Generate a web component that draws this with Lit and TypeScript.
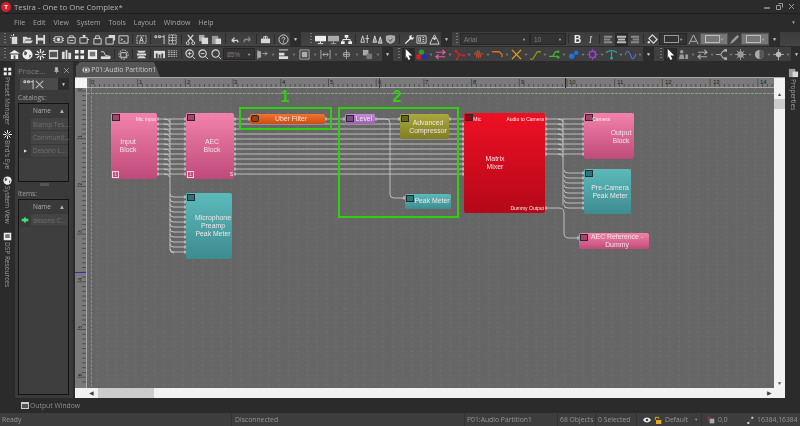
import { LitElement, html, css, svg } from "lit";
import { customElement } from "lit/decorators.js";

const G = "#d8d8d8";

// simple toolbar glyphs, 12x12
const icons: Record<string, any> = {
  new: svg`<path d="M3 3h6v8H3z" fill="${G}"/><path d="M2 1l1 1M5 0v2M1 4h1" stroke="#fff"/>`,
  open: svg`<path d="M1 3h4l1 1h4v2H4L2 10H1zM4 7h8l-2 3H2z" fill="${G}"/>`,
  save: svg`<path d="M1 1h10v10H1z" fill="${G}"/><path d="M3 1h6v3H3zM3 7h6v4H3z" fill="#444"/>`,
  dev1: svg`<path d="M2 3h8v6H2zM0 5h2M0 7h2M10 5h2M10 7h2" fill="none" stroke="${G}"/><circle cx="6" cy="6" r="2" fill="${G}"/>`,
  dev2: svg`<path d="M2 4h8v6H2z" fill="none" stroke="${G}"/><path d="M4 4V2h4v2M4 7h4" stroke="${G}" fill="none"/>`,
  dev3: svg`<path d="M1 4h8v6H1zM9 6h2" fill="none" stroke="${G}"/><path d="M4 1h3v3H4z" fill="${G}"/>`,
  lock: svg`<path d="M2 5h8v6H2z" fill="none" stroke="${G}"/><path d="M4 5V2h4v3" fill="none" stroke="${G}"/>`,
  pic: svg`<path d="M1 4h8v7H1z" fill="none" stroke="${G}"/><path d="M4 1h7v6H9V4H4z" fill="${G}"/>`,
  term: svg`<path d="M1 2h10v8H1z" fill="none" stroke="${G}"/><path d="M3 5l2 1-2 1M6 8h2" stroke="${G}" fill="none"/>`,
  txt: svg`<path d="M1 2h10v8H1z" fill="none" stroke="${G}" stroke-dasharray="2 1"/><path d="M4 9l2-6 2 6M5 7h2" stroke="${G}" fill="none"/>`,
  port: svg`<path d="M1 2h2v2H1zM5 2h2v2H5zM8 3h3M11 1v10" stroke="${G}" fill="none"/>`,
  grid: svg`<path d="M2 1h8v10H2zM6 1v10M2 4h8M2 7h8" stroke="${G}" fill="none" stroke-dasharray="1.5 .5"/>`,
  cut: svg`<path d="M3 1l6 7M9 1L3 8" stroke="${G}" stroke-width="1.3"/><circle cx="3" cy="10" r="1.6" fill="none" stroke="${G}"/><circle cx="9" cy="10" r="1.6" fill="none" stroke="${G}"/>`,
  copy: svg`<path d="M1 1h6v7H1z" fill="#aaa"/><path d="M4 4h7v7H4z" fill="${G}"/>`,
  paste: svg`<path d="M1 2h7v9H1z" fill="#999"/><path d="M5 5h6v6H5z" fill="${G}"/>`,
  undo: svg`<path d="M3 7h6l1 2M3 7l3-3M3 7l3 2" stroke="${G}" stroke-width="1.4" fill="none"/>`,
  redo: svg`<path d="M9 6H3L2 9M9 6L7 3M9 6L7 8" stroke="#888" stroke-width="1.4" fill="none"/>`,
  bag: svg`<path d="M1 5h10v5H1z" fill="${G}"/><path d="M4 5V3h4v2M6 2v4" stroke="${G}" fill="none"/>`,
  help: svg`<circle cx="6" cy="6" r="5" fill="none" stroke="${G}"/><path d="M4.5 5c0-2 3-2 3 0 0 1-1.500 1-1.500 2M6 8v1.500" stroke="${G}" fill="none"/>`,
  mon: svg`<path d="M0 2h12v6H0z" fill="#eee"/><path d="M6 8v2M3 10.500h6" stroke="#eee"/>`,
  mon2: svg`<path d="M0 2h12v6H0z" fill="#aaa"/><path d="M6 8v2M3 10.500h6" stroke="#aaa"/>`,
  tree: svg`<path d="M4 1h4v3H4zM0 8h4v3H0zM8 8h4v3H8z" fill="#eee"/><path d="M6 4v2M2 8V6h8v2" stroke="#eee" fill="none"/>`,
  rec1: svg`<path d="M4 2l-2 7h4zM9 1v9M7 5h4" stroke="${G}" fill="none"/>`,
  rec2: svg`<path d="M3 2l-2 7h4zM9 3l-2 7h4z" stroke="${G}" fill="#888"/>`,
  shield: svg`<path d="M1 2l5-1 5 1v4c0 3-3 4-5 5-2-1-5-2-5-5z" fill="#aaa"/><path d="M4 6l2 2 2-3" stroke="#444" fill="none"/>`,
  wrench: svg`<path d="M2 10l5-5V2l3-1-1 2 1 1 2-1-1 3H8l-5 5z" fill="#eee"/>`,
  form: svg`<path d="M1 2h10v8H1z" fill="none" stroke="${G}"/><path d="M3 4h2v4H3zM7 4h2M7 6h2M7 8h2" stroke="${G}" fill="none"/>`,
  user: svg`<path d="M6 1l3 5 2 5H1l2-5z" fill="none" stroke="${G}"/><circle cx="6" cy="5" r="1.500" fill="${G}"/>`,
  al: svg`<path d="M1 2h9v2H1zM1 5h7v2H1zM1 8h9v2H1z" fill="#888"/>`,
  ac: svg`<path d="M1 2h10v2H1zM2 5h8v2H2zM1 8h10v2H1z" fill="#bbb"/>`,
  ar: svg`<path d="M2 2h9v2H2zM4 5h7v2H4zM2 8h9v2H2z" fill="#888"/>`,
  bucket: svg`<path d="M6 1l5 5-4 4-5-5z" fill="none" stroke="${G}" stroke-width="1.300"/><circle cx="2" cy="9" r="1.300" fill="${G}"/>`,
  font: svg`<path d="M1 11l5-10 5 10M3 8h6" stroke="#bbb" fill="none"/>`,
  pen: svg`<path d="M1 11l2-4 6-6 2 2-6 6z" fill="#999"/>`,
  house: svg`<path d="M0 5l6-4 6 4H0zM2 6h8v5H2z" fill="#eee"/><path d="M5 7h2v4H5z" fill="#555"/>`,
  globe: svg`<circle cx="6" cy="6" r="5.500" fill="#eee"/><path d="M3 2l3 2-2 3-2-1zM8 6l2 1-2 3z" fill="#555"/>`,
  burst: svg`<path d="M6 0v12M0 6h12M2 2l8 8M10 2l-8 8" stroke="#eee" stroke-width="1.300"/><circle cx="6" cy="6" r="2" fill="#555"/>`,
  panel: svg`<path d="M1 1h10v10H1z" fill="#ddd"/><path d="M2 3h8v6H2z" fill="#555"/>`,
  bars: svg`<path d="M1 3h3v8H1zM5 1h2v10H5zM8 4h3v7H8z" fill="#ddd"/>`,
  four: svg`<path d="M1 1h4v4H1zM7 1h4v4H7zM1 7h4v4H1zM7 7h4v4H7z" fill="#eee"/>`,
  frame: svg`<path d="M1 1h10v10H1z" fill="#eee"/><path d="M3 3h6v5H3z" fill="#777"/>`,
  stage: svg`<path d="M1 10h10V8L6 7 4 3H1" fill="none" stroke="#ddd"/><path d="M1 8h10v3H1z" fill="#ddd"/>`,
  scan: svg`<circle cx="6" cy="6" r="5" fill="none" stroke="${G}" stroke-dasharray="2 1"/><path d="M3 4h6v5H3z" fill="none" stroke="${G}"/>`,
  stack: svg`<path d="M1 2h10l-2 2H3zM1 5h10v2H1zM3 8h6l2 2H1z" fill="#ddd"/>`,
  strip: svg`<path d="M0 2h12v8H0z" fill="#ddd"/><path d="M2 5h2v5H2zM5 6h2v4H5zM8 5h2v5H8z" fill="#444"/>`,
  dots: svg`<path d="M1 2h10M1 4h10M1 6h10M1 8h10" stroke="#ccc" stroke-dasharray="2 1"/>`,
  zin: svg`<circle cx="5" cy="5" r="4" fill="none" stroke="${G}" stroke-width="1.200"/><path d="M8 8l3 3M3 5h4M5 3v4" stroke="${G}" stroke-width="1"/>`,
  zout: svg`<circle cx="5" cy="5" r="4" fill="none" stroke="${G}" stroke-width="1.200"/><path d="M8 8l3 3M3 5h4" stroke="${G}"/>`,
  zfit: svg`<circle cx="5" cy="5" r="4" fill="none" stroke="${G}" stroke-width="1.200"/><path d="M8 8l3 3" stroke="${G}"/>`,
  aleft: svg`<path d="M1 1v10M1 3h3v6H1z" stroke="#aaa" fill="#aaa"/><path d="M6 5h5M9 3l2 2-2 2" stroke="#aaa" fill="none"/>`,
  atop: svg`<path d="M1 1h10" stroke="#ddd"/><path d="M1 4h6v3H1zM1 8h10v3H1z" fill="#ddd"/>`,
  acen: svg`<path d="M1 1h10v10H1z" fill="none" stroke="#aaa"/><path d="M3 3h6v6H3z" fill="#aaa"/>`,
  hsp: svg`<path d="M1 1v10M11 1v10M3 6h6M3 6l2-2M3 6l2 2M9 6L7 4M9 6L7 8" stroke="#aaa" fill="none"/>`,
  vsp: svg`<path d="M6 1v10M2 6h8M3 4h6v4H3z" stroke="#aaa" fill="none"/>`,
  sq2: svg`<path d="M1 1h6v6H1z" fill="#aaa"/><path d="M5 5h6v6H5z" fill="#777"/>`,
  cursor: svg`<path d="M3 0l7 7H6l2 4-2 1-2-4-1 2z" fill="#fff"/>`,
  rgb: svg`<circle cx="6" cy="3.500" r="3" fill="#2a9a2a"/><circle cx="3" cy="8.500" r="3" fill="#d02020"/><path d="M6 6h6v5H6z" fill="#2030b0"/>`,
  conn1: svg`<path d="M1 3.500h9M8 1l3 2.500L8 6M11 8.500H2M4 6L1 8.500 4 11" stroke="#e060a0" stroke-width="1.200" fill="none"/>`,
  conn2: svg`<path d="M1 2l5 4 5 1M6 6l-3 5" stroke="#e02020" stroke-width="1.300" fill="none"/><circle cx="2" cy="2" r="1.300" fill="#e02020"/><circle cx="11" cy="7" r="1.300" fill="#e02020"/><circle cx="3" cy="11" r="1.300" fill="#e02020"/>`,
  conn3: svg`<path d="M1 6h1l1-3 1 6 1-8 1 9 1-8 1 7 1-4h2" stroke="#c84828" fill="none"/>`,
  conn4: svg`<path d="M0 3h8l3 3v3" stroke="#e07020" stroke-width="1.400" fill="none"/>`,
  conn5: svg`<path d="M1 1l10 10M11 1L1 11" stroke="#e8a020" stroke-width="1.400"/>`,
  conn6: svg`<path d="M0 11h3l5-8h4" stroke="#909020" stroke-width="1.400" fill="none"/>`,
  conn7: svg`<path d="M0 8h4l3-5h3M4 8h6" stroke="#40b030" stroke-width="1.400" fill="none"/><circle cx="10" cy="3" r="1.500" fill="#40b030"/><circle cx="10" cy="9" r="1.500" fill="#40b030"/>`,
  conn8: svg`<circle cx="4" cy="8" r="3" fill="#2070e0"/><circle cx="9" cy="4" r="2.500" fill="#2070e0"/>`,
  conn9: svg`<circle cx="6" cy="6" r="3.500" fill="none" stroke="#a040d8" stroke-width="1.600"/><path d="M6 0v2M6 10v2M0 6h2M10 6h2M2 2l1 1M9 9l1 1M10 2L9 3M2 10l1-1" stroke="#a040d8"/>`,
  conn10: svg`<path d="M0 4c3-3 9-3 12 0M6 3v7" stroke="#30a0a0" stroke-width="1.300" fill="none"/><circle cx="6" cy="10" r="1.500" fill="#30a0a0"/>`,
  conn11: svg`<path d="M0 7c2-6 4-6 6 0s4 4 6-2" stroke="#6070d8" stroke-width="1.200" fill="none"/>`,
  g1: svg`<circle cx="4" cy="3" r="2" fill="#999"/><path d="M1 11l1-5h4l1 5zM8 6h3v5H8z" fill="#999"/>`,
  g2: svg`<path d="M1 3.500h9M8 1l3 2.500L8 6M11 8.500H2M4 6L1 8.500 4 11" stroke="#aaa" stroke-width="1.200" fill="none"/>`,
  g3: svg`<path d="M0 6h5l3-4h2M5 6l3 4h2" stroke="#aaa" stroke-width="1.200" fill="none"/><path d="M9 0h3v3H9zM9 9h3v3H9z" fill="#aaa"/>`,
  g4: svg`<circle cx="6" cy="6" r="3.500" fill="#999"/><path d="M6 0v12M0 6h12M2 2l8 8M10 2l-8 8" stroke="#999"/>`,
  g5: svg`<circle cx="6" cy="6" r="5" fill="#aaa"/><path d="M6 1a5 5 0 010 10z" fill="#555"/>`,
  g6: svg`<path d="M6 0v12M0 6h12" stroke="#aaa"/><circle cx="6" cy="6" r="3" fill="#bbb"/>`,
  pin: svg`<path d="M4 1h4v5l1.500 1.500h-7L4 6zM6 7.500V11" fill="#bbb" stroke="#bbb"/>`,
  close: svg`<path d="M2 2l8 8M10 2l-8 8" stroke="#bbb" stroke-width="1.200"/>`,
};

type Item =
  | string
  | { k: "sep" | "grip" | "drop" | "arrow" | "gap" | "hi" | "on"; n?: string; w?: number }
  | { combo: string; w: number; tone?: string };
const S = { k: "sep" } as const;
const GR = { k: "grip" } as const;
const D = { k: "drop" } as const;
const A = { k: "arrow" } as const;
const A8 = { k: "arrow", w: 8 } as const;

const row1: Item[] = [
  GR, "new", "open", "save", S, "dev1", "dev2", "dev3", "lock", "pic", "term", S, "txt", S, "port", "grid", S,
  "cut", "copy", "paste", S, "undo", "redo", S, "bag", S, "help", D, { k: "gap", w: 7 }, GR, "mon", "mon2", "tree", S,
  "rec1", "rec2", "shield", S, "wrench", "form", "user", D, { k: "gap", w: 2 }, GR,
  { combo: "Arial", w: 70 }, { combo: "10", w: 36 }, S, { k: "hi", n: "B" }, { k: "hi", n: "I" }, S, "al", { k: "on", n: "ac" }, "ar", S,
  "bucket", { combo: "", w: 28 }, "font", { combo: "", w: 28, tone: "light" }, "pen", { combo: "", w: 28, tone: "light" }, D,
];

const row2: Item[] = [
  GR, "house", "globe", "burst", "panel", "bars", "four", "frame", "stage", S, "scan", S, "stack", S, "strip", "dots", S,
  "zin", "zout", "zfit", { combo: "85%", w: 32 }, { k: "gap", w: 1 }, "aleft", A8, "atop", A8, "acen", A8, "hsp", A8, "vsp", A8, "sq2", A8, D,
  { k: "gap", w: 3 }, GR, { k: "on", n: "cursor" }, "rgb", A, "conn1", A, "conn2", A, "conn3", A, "conn4", A, "conn5", A, "conn6", A, "conn7", A,
  "conn8", A, "conn9", A, "conn10", A, "conn11", A, D, { k: "gap", w: 4 }, GR, { k: "on", n: "cursor" }, "g1", A, "g2", A, "g3", A, "g4", A, "g5", A, "g6", A, D,
];

const ic = (n: string) => html`<svg class="ic" viewBox="0 0 12 12">${icons[n]}</svg>`;

type Block = { x: number; y: number; w: number; h: number; c: string; lines: string[]; cx: number; cy: number; badge: string; one?: boolean };

const blocks: Block[] = [
  { x: 111, y: 113, w: 46, h: 66, c: "pink", lines: ["Input", "Block"], cx: 128, cy: 146, badge: "pink", one: true },
  { x: 186, y: 113, w: 48, h: 66, c: "pink", lines: ["AEC", "Block"], cx: 212, cy: 146, badge: "pink", one: true },
  { x: 186, y: 193, w: 46, h: 66, c: "teal", lines: ["Microphone", "Preamp", "Peak Meter"], cx: 213, cy: 226, badge: "teal" },
  { x: 250, y: 114, w: 75, h: 10, c: "orange", lines: ["Uber Filter"], cx: 291, cy: 119, badge: "orange" },
  { x: 345, y: 114, w: 30, h: 10, c: "purple", lines: ["Level"], cx: 364, cy: 119, badge: "purple" },
  { x: 400, y: 114, w: 49, h: 25, c: "olive", lines: ["Advanced", "Compressor"], cx: 428, cy: 127, badge: "olive" },
  { x: 405, y: 194, w: 46, h: 15, c: "teal", lines: ["Peak Meter"], cx: 432, cy: 201, badge: "teal" },
  { x: 464, y: 113, w: 81, h: 100, c: "red", lines: ["Matrix", "Mixer"], cx: 495, cy: 163, badge: "red" },
  { x: 584, y: 113, w: 50, h: 46, c: "pink", lines: ["Output", "Block"], cx: 621, cy: 137, badge: "pink" },
  { x: 584, y: 169, w: 47, h: 45, c: "teal", lines: ["Pre-Camera", "Peak Meter"], cx: 610, cy: 192, badge: "teal" },
  { x: 579, y: 233, w: 70, h: 16, c: "pink", lines: ["AEC Reference -", "Dummy"], cx: 617, cy: 241, badge: "pink" },
];

const portLabels = [
  { t: "Mic Input", r: 156, y: 119 },
  { t: "Audio to Camera", r: 544, y: 119 },
  { t: "Dummy Output", r: 544, y: 208 },
  { t: "Mic", r: 481, y: 119 },
  { t: "Camera", r: 610, y: 119 },
  { t: "S", r: 233, y: 174 },
];

// canvas starts at 87,88 in page coords
const OX = 87;
const OY = 88;
const ys = (from: number, n: number) => Array.from({ length: n }, (_, i) => from + i * 5);

function wirePaths(): string[] {
  const p: string[] = [];
  ys(119, 12).forEach((y) => p.push(`M157 ${y}H186`));
  ys(119, 12).forEach((y) => p.push(`M164 ${y}q4 0 6 3`));
  p.push("M170 119V249q0 4 4 4");
  ys(197, 12).forEach((y) => p.push(`M170 ${y - 3}q0 3 4 3H186`));
  p.push("M234 119H250M325 119H345M375 119H400M449 119H464");
  ys(124, 11).forEach((y) => {
    if (y < 139) {
      p.push(`M234 ${y}H400M449 ${y}H464`);
    } else {
      p.push(`M234 ${y}H464`);
    }
  });
  p.push("M375 119H386q4 0 4 4V194q0 4 4 4H405");
  ys(119, 8).forEach((y) => p.push(`M545 ${y}H584`));
  ys(119, 8).forEach((y) => p.push(`M558 ${y}q4 0 5 3`));
  p.push("M563 119V205");
  ys(173, 8).forEach((y) => p.push(`M564 ${y - 3}q0 3 4 3H584`));
  p.push("M545 208H559q5 0 5 5V233q0 5 5 5H579");
  return p;
}

function stubs() {
  const out: [number, number][] = [];
  ys(119, 12).forEach((y) => { out.push([157, y], [184, y], [234, y]); });
  ys(197, 12).forEach((y) => out.push([184, y]));
  out.push([248, 119], [325, 119], [343, 119], [375, 119], [398, 119], [449, 119], [403, 198], [577, 238], [545, 208]);
  ys(124, 11).forEach((y) => out.push([462, y]));
  ys(119, 8).forEach((y) => { out.push([545, y], [582, y]); });
  ys(173, 8).forEach((y) => out.push([582, y]));
  return out;
}

const rulerX = [90, 138, 186, 233, 281, 329, 377, 424, 472, 520, 568, 616, 664, 712, 759];
const sideRail = [
  { t: "Preset Manager", i: "four" },
  { t: "Bird's Eye", i: "burst" },
  { t: "System View", i: "globe" },
  { t: "DSP Resources", i: "frame" },
];

@customElement("app-root")
export class AppRoot extends LitElement {
  static styles = css`
    :host {
      display: block;
      width: 800px;
      height: 426px;
      overflow: hidden;
      background: #2b2b2b;
      font-family: "Open Sans", "Liberation Sans", sans-serif;
      color: #a8a8a8;
    }
    .app { display: flex; flex-direction: column; height: 426px; filter: blur(0.3px); }
    .title { height: 13px; display: flex; align-items: center; padding-left: 1px; gap: 3px; font-size: 7.800px; color: #b4b4b4; white-space: nowrap; }
    .logo { width: 10px; height: 10px; border-radius: 50%; background: #d8202a; color: #fff; font: bold 6px "Liberation Sans", sans-serif; display: flex; align-items: center; justify-content: center; }
    .winbtns { margin-left: auto; display: flex; gap: 5px; padding-right: 5px; align-items: center; }
    .winbtns svg { width: 7px; height: 7px; }
    .menu { height: 17px; box-sizing: border-box; display: flex; align-items: center; font-size: 7px; padding-left: 14px; gap: 8px; border-top: 1px solid #1e1e1e; color: #a4a4a4; position: relative; }
    .menu .more { margin-left: auto; margin-right: 4px; color: #999; font-size: 5px; }
    .bars { height: 30px; display: flex; flex-direction: column; }
    .tb { height: 14px; margin-top: 1px; display: flex; align-items: center; background: #3f3f3f; padding-left: 2px; }
    .tb:first-child { margin-top: 2px; background: linear-gradient(#3c3c3c, #444); }
    .cell { flex: 0 0 13px; height: 13px; display: flex; align-items: center; justify-content: center; }
    .cell.on { background: #2a2a2a; }
    .ic { width: 11px; height: 11px; display: block; }
    .sep { flex: 0 0 5px; height: 12px; position: relative; }
    .sep::after { content: ""; position: absolute; left: 2px; top: 1px; width: 1px; height: 10px; background: #2b2b2b; }
    .grip { flex: 0 0 6px; height: 12px; background: repeating-linear-gradient(#777 0 1px, transparent 1px 3px) 2px 0 / 2px 100% no-repeat; }
    .arrow { flex: 0 0 6px; height: 13px; font-size: 4px; color: #888; display: flex; align-items: center; justify-content: center; }
    .drop { flex: 0 0 11px; height: 14px; background: #2c2c2c; color: #ccc; font-size: 5px; display: flex; align-items: center; justify-content: center; }
    .combo { height: 12px; box-sizing: border-box; background: #333; border: 1px solid #272727; display: flex; align-items: center; padding: 0 3px; font: 6.500px "Liberation Sans", sans-serif; color: #808080; }
    .combo i { margin-left: auto; font-size: 4px; font-style: normal; color: #aaa; }
    .combo b { width: 13px; height: 6px; border: 1px solid #999; margin-left: 1px; }
    .combo.light { background: #777; border-color: #555; }
    .combo.light b { border-color: #bbb; }
    .hi { flex: 0 0 13px; text-align: center; font: bold 10px "Liberation Sans", sans-serif; color: #eee; }
    .hi.i { font: italic 10px "Liberation Serif", serif; color: #ccc; }

    .main { flex: 1; display: flex; min-height: 0; }
    .rail { width: 14px; flex: none; display: flex; flex-direction: column; align-items: center; padding-top: 7px; box-sizing: border-box; }
    .rail-item { display: flex; flex-direction: column; align-items: center; gap: 1px; height: 56px; }
    .rail-item:first-child { height: 63px; }
    .rail-item:nth-child(2) { height: 46px; }
    .rail-item .ic { width: 9px; height: 9px; }
    .vt { writing-mode: vertical-rl; font-size: 6.500px; line-height: 9px; color: #9a9a9a; white-space: nowrap; }

    .panel { width: 58px; flex: none; box-sizing: border-box; background: #3a3a3a; margin: 2px 0 0 1px; display: flex; flex-direction: column; padding: 0 3px 3px; }
    .phead { height: 16px; flex: none; display: flex; align-items: center; font-size: 8px; color: #808080; justify-content: space-between; }
    .phead span:last-child { display: flex; gap: 3px; }
    .phead .ic { width: 7px; height: 7px; }
    .ptools { height: 12px; flex: none; background: #4a4a4a; display: flex; align-items: center; padding-left: 3px; margin: 0 1px 0 2px; }
    .ptools .drop { margin-left: auto; height: 12px; }
    .plabel { font-size: 6.600px; color: #a0a0a0; height: 11px; flex: none; display: flex; align-items: center; margin-top: 2px; }
    .ptable { border: 1px solid #141414; background: #3e3e3e; box-sizing: border-box; display: flex; flex-direction: column; margin-right: 1px; }
    .ptable.cat { height: 79px; flex: none; }
    .ptable.items { flex: 1; }
    .tr { height: 12.300px; flex: none; display: flex; align-items: center; font-size: 6.400px; border-bottom: 1px solid #383838; }
    .tr .gut { width: 12px; height: 100%; background: #393939; flex: none; display: flex; align-items: center; justify-content: center; font-size: 4px; color: #ddd; }
    .tr .gut .ic { width: 8px; height: 8px; }
    .tr .val { padding-left: 2px; color: #707070; white-space: nowrap; background: #444; flex: 1; min-width: 0; height: 100%; display: flex; align-items: center; }
    .tr.head { height: 13px; color: #b0b0b0; }
    .tr.head .val { background: #3a3a3a; color: #b0b0b0; justify-content: space-between; padding-right: 3px; }
    .splitter { height: 4px; flex: none; padding-top: 1px; box-sizing: border-box; display: flex; justify-content: center; }
    .splitter i { width: 9px; height: 3px; background: #555; }

    .work { flex: 1; min-width: 0; margin-left: 2px; display: flex; flex-direction: column; }
    .tabs { height: 17px; padding: 2px 0 0 1px; box-sizing: border-box; flex: none; }
    .tab { width: 84px; height: 15px; box-sizing: border-box; background: #555; display: flex; align-items: center; gap: 1px; padding-left: 6px; font-size: 6.800px; color: #c8c8c8; clip-path: polygon(0 4px, 4px 0, 78px 0, 84px 100%, 0 100%); white-space: nowrap; }
    .tab .ic { width: 9px; height: 8px; }
    .doc { flex: 1; min-height: 0; display: grid; grid-template-columns: 12px 1fr 11px; grid-template-rows: 10px 1fr 10px; border-top: 1px solid #aaa; }
    .corner { background: #f4f4f4; }
    .ruler { background: #7a7a7a; border-bottom: 1px solid #a8a8a8; box-sizing: border-box; }
    .ruler.side { border-bottom: 0; border-right: 1px solid #a8a8a8; }
    .ruler svg { display: block; }
    .canvas { position: relative; overflow: hidden; background-color: #666; background-image: radial-gradient(circle at 1px 1px, #707070 0.6px, transparent 0.8px); background-size: 9.540px 4.770px; }
    .canvas > svg { position: absolute; left: 0; top: 0; }
    .vbar { background: #f2f2f2; display: flex; flex-direction: column; align-items: center; font-size: 5px; color: #444; grid-row: 1 / 3; grid-column: 3; padding-top: 13px; box-sizing: border-box; }
    .vbar i { width: 100%; height: 10px; margin-top: 2px; background: #ccc; }
    .vbar span:last-child { margin-top: auto; padding-bottom: 2px; }
    .hbar { grid-column: 1 / 4; background: #f2f2f2; display: flex; align-items: center; font-size: 6px; color: #444; padding-left: 14px; }
    .hbar i { width: 56px; height: 100%; background: #ccc; margin-left: 4px; }
    .hbar span:last-child { margin-left: auto; margin-right: 13px; }

    .block { position: absolute; box-sizing: border-box; border-radius: 2px; font: 6.900px/7.800px "Liberation Sans", sans-serif; color: #f0e4e6; }
    .pink { background: linear-gradient(#f282ab, #bf4a7a); }
    .teal { background: linear-gradient(#5cbaba, #3d8c90); }
    .orange { background: linear-gradient(#f2742e, #c94e10); border-radius: 2px; }
    .purple { background: linear-gradient(#c58cd6, #9a62b2); }
    .olive { background: linear-gradient(#a9a93c, #7e7e24); }
    .red { background: linear-gradient(#ee1024, #b40818); }
    .blabel { position: absolute; transform: translate(-50%, -50%); text-align: center; white-space: nowrap; }
    .badge { position: absolute; left: 1px; top: 1px; width: 8px; height: 7px; box-sizing: border-box; border: 1px solid #2a2a2a; }
    .badge.teal { background: #2f7478; }
    .badge.pink { background: #a84070; }
    .badge.orange { background: #a04010; }
    .badge.purple { background: #7c4c90; }
    .badge.olive { background: #66661c; }
    .badge.red { background: #900812; }
    .one { position: absolute; left: 1px; bottom: 1px; width: 7px; height: 7px; box-sizing: border-box; border: 1px solid #f8d8e4; color: #f8d8e4; font-size: 4.500px; line-height: 5px; text-align: center; }
    .plab { position: absolute; font: 5px/6px "Liberation Sans", sans-serif; color: #f4f0f0; transform: translate(-100%, -50%); white-space: nowrap; }
    .hl { position: absolute; box-sizing: border-box; border: 2.500px solid #2ed10e; }
    .hlnum { position: absolute; transform: translate(-50%, -50%); font: bold 16px/13px "Liberation Sans", sans-serif; color: #2ed10e; }

    .propwrap { width: 13px; flex: none; margin-left: 2px; display: flex; flex-direction: column; align-items: center; padding-top: 7px; gap: 1px; box-sizing: border-box; }
    .output { height: 15px; flex: none; display: flex; align-items: center; padding-left: 21px; gap: 1px; font-size: 6.800px; color: #8e8e8e; }
    .output b { width: 8px; height: 7px; border: 1px solid #ccc; border-top-width: 2px; box-sizing: border-box; background: #555; }
    .status { height: 13px; flex: none; background: #3d3d3d; display: flex; align-items: center; font-size: 6.800px; color: #959595; white-space: nowrap; }
    .st { display: flex; align-items: center; height: 100%; box-sizing: border-box; gap: 3px; }
    .st + .st { border-left: 1px solid #333; }
    .st .ic { width: 8px; height: 8px; }
  `;

  private renderRow(items: Item[]) {
    return items.map((it) => {
      if (typeof it === "string") return html`<div class="cell">${ic(it)}</div>`;
      if ("combo" in it) {
        return html`<div class="combo ${it.tone ?? ""}" style="flex:0 0 ${it.w}px">${it.combo}${it.combo ? "" : html`<b></b>`}<i>▼</i></div>`;
      }
      if (it.k === "gap") return html`<div style="flex:0 0 ${it.w}px"></div>`;
      if (it.k === "on") return html`<div class="cell on">${ic(it.n!)}</div>`;
      if (it.k === "hi") return html`<div class="hi ${it.n === "I" ? "i" : ""}">${it.n}</div>`;
      if (it.k === "sep") return html`<div class="sep"></div>`;
      if (it.k === "grip") return html`<div class="grip"></div>`;
      if (it.k === "arrow") return html`<div class="arrow" style="flex-basis:${it.w ?? 6}px">▼</div>`;
      return html`<div class="drop">▼</div>`;
    });
  }

  private renderBlock(b: Block) {
    return html`<div class="block ${b.c}" style="left:${b.x - OX}px;top:${b.y - OY}px;width:${b.w}px;height:${b.h}px">
      <span class="badge ${b.badge}"></span>
      ${b.one ? html`<span class="one">1</span>` : ""}
      <div class="blabel" style="left:${b.cx - b.x}px;top:${b.cy - b.y}px">${b.lines.map((l) => html`${l}<br />`)}</div>
    </div>`;
  }

  private renderCanvas() {
    return html`<div class="canvas">
      <svg width="687" height="300">
        <path d="M0 5.500H687" stroke="#7fa87f" stroke-width="1" stroke-dasharray="3 1" />
        <path d="M4.500 0V300" stroke="#6f9c6f" stroke-width="1" stroke-dasharray="3 1" />
        <g transform="translate(${-OX} ${-OY})">
          <path d="${wirePaths().join("")}" stroke="#d4d4d4" stroke-width="0.800" fill="none" />
          ${stubs().map(([x, y]) => svg`<rect x="${x}" y="${y - 1.5}" width="2" height="3" fill="#b4b4b4" />`)}
        </g>
      </svg>
      ${blocks.map((b) => this.renderBlock(b))}
      ${portLabels.map((l) => html`<span class="plab" style="left:${l.r - OX}px;top:${l.y - OY}px">${l.t}</span>`)}
      <div class="hl" style="left:${239 - OX}px;top:${107 - OY}px;width:93px;height:23px"></div>
      <div class="hl" style="left:${338 - OX}px;top:${107 - OY}px;width:121px;height:111px"></div>
      <span class="hlnum" style="left:${285 - OX}px;top:${96 - OY}px">1</span>
      <span class="hlnum" style="left:${397 - OX}px;top:${96 - OY}px">2</span>
    </div>`;
  }

  private renderRulers() {
    const tx = Array.from({ length: 144 }, (_, i) => i);
    return html`
      <div class="corner"></div>
      <div class="ruler">
        <svg width="687" height="10">
          ${tx.map((i) => svg`<path d="M${3 + i * 4.77} ${i % 10 === 0 ? 1 : 6}V9" stroke="#333" stroke-width="0.600" />`)}
          ${rulerX.map((x, i) => svg`<text x="${x - OX + 1}" y="6" font-size="6" font-family="Liberation Sans" fill="#222">${i}</text>`)}
          <path d="M292.500 0V10" stroke="#3030b0" />
          <path d="M478.500 0V10" stroke="#222" />
        </svg>
      </div>
      <div class="ruler side" style="grid-row:2;grid-column:1">
        <svg width="11" height="300">
          ${Array.from({ length: 62 }, (_, i) => svg`<path d="M${i % 10 === 0 ? 2 : 7} ${3 + i * 4.77}H11" stroke="#333" stroke-width="0.600" />`)}
          ${[0, 1, 2, 3, 4, 5, 6].map((n) => svg`<text transform="translate(7 ${2 + n * 47.7}) rotate(-90)" font-size="5" font-family="Liberation Sans" fill="#222">${n}</text>`)}
          <path d="M0 184.500H11" stroke="#3030b0" />
        </svg>
      </div>`;
  }

  render() {
    return html`<div class="app">
      <div class="title">
        <span class="logo">T</span><span>Tesira - One to One Complex*</span>
        <span class="winbtns">
          <svg viewBox="0 0 7 7"><path d="M0 5h6" stroke="#999" stroke-width="1.500" /></svg>
          <svg viewBox="0 0 7 7"><path d="M.5 2.500h4v4h-4zM2.500.5h4v4" fill="none" stroke="#999" /></svg>
          <svg viewBox="0 0 7 7"><path d="M1 1l5 5M6 1L1 6" stroke="#999" /></svg>
        </span>
      </div>
      <div class="menu">
        ${["File", "Edit", "View", "System", "Tools", "Layout", "Window", "Help"].map((m) => html`<span>${m}</span>`)}
        <span class="more">▼</span>
      </div>
      <div class="bars">
        <div class="tb">${this.renderRow(row1)}</div>
        <div class="tb">${this.renderRow(row2)}</div>
      </div>
      <div class="main">
        <div class="rail">
          ${sideRail.map((r) => html`<div class="rail-item">${ic(r.i)}<span class="vt">${r.t}</span></div>`)}
        </div>
        <div class="panel">
          <div class="phead"><span>Proce...</span><span>${ic("pin")}${ic("close")}</span></div>
          <div class="ptools">${ic("port")}${ic("close")}<div class="drop">▼</div></div>
          <div class="plabel">Catalogs:</div>
          <div class="ptable cat">
            <div class="tr head"><span class="gut"></span><span class="val">Name<span>▲</span></span></div>
            <div class="tr"><span class="gut"></span><span class="val">Biamp Tes...</span></div>
            <div class="tr"><span class="gut"></span><span class="val">Communit...</span></div>
            <div class="tr"><span class="gut">▶</span><span class="val">Desono L...</span></div>
          </div>
          <div class="splitter"><i></i></div>
          <div class="plabel">Items:</div>
          <div class="ptable items">
            <div class="tr head"><span class="gut"></span><span class="val">Name<span>▲</span></span></div>
            <div class="tr">
              <span class="gut"><svg class="ic" viewBox="0 0 12 12"><path d="M6 1l2 3h3v4H8l-2 3-2-3H1V4h3z" fill="#3fe07a" /></svg></span>
              <span class="val">desono C...</span>
            </div>
          </div>
        </div>
        <div class="work">
          <div class="tabs">
            <div class="tab">${ic("dev1")}<span>P01:Audio Partition1*</span></div>
          </div>
          <div class="doc">
            ${this.renderRulers()}
            ${this.renderCanvas()}
            <div class="vbar"><span>▲</span><i></i><span>▼</span></div>
            <div class="hbar"><span>◀</span><i></i><span>▶</span></div>
          </div>
        </div>
        <div class="propwrap">${ic("paste")}<span class="vt">Properties</span></div>
      </div>
      <div class="output"><b></b><span>Output Window</span></div>
      <div class="status">
        <div class="st" style="width:231px;padding-left:2px">Ready</div>
        <div class="st" style="width:233px;padding-left:3px">Disconnected</div>
        <div class="st" style="width:93px;padding-left:2px">P01:Audio Partition1</div>
        <div class="st" style="width:38px;padding-left:2px">68 Objects</div>
        <div class="st" style="width:41px;padding-left:2px">0 Selected</div>
        <div class="st" style="width:65px;padding-left:6px">
          <svg class="ic" viewBox="0 0 12 12"><path d="M0 6c3-5 9-5 12 0-3 5-9 5-12 0z" fill="#eee" /><circle cx="6" cy="6" r="2" fill="#444" /></svg>
          <svg class="ic" viewBox="0 0 12 12"><path d="M3 6h8v6H3z" fill="#e8a820" /><path d="M2 6V2h5v2" stroke="#e8a820" fill="none" stroke-width="1.500" /></svg>
          <span>Default</span><span style="font-size:4px;margin-left:3px">▼</span>
        </div>
        <div class="st" style="width:43px;padding-left:5px">
          <svg class="ic" viewBox="0 0 12 12"><path d="M3 0v8M0 3h3" stroke="#d04040" /><path d="M4 4h7v7H4z" fill="#aaa" /></svg>
          <span>0,0</span>
        </div>
        <div class="st" style="flex:1;padding-left:2px;border:0">
          <svg class="ic" viewBox="0 0 12 12"><path d="M2 9h3v3H2zM8 1h3v3H8z" fill="#ccc" /><path d="M5 9l3-5" stroke="#d04040" /></svg>
          <span>16384,16384</span>
        </div>
      </div>
    </div>`;
  }
}
